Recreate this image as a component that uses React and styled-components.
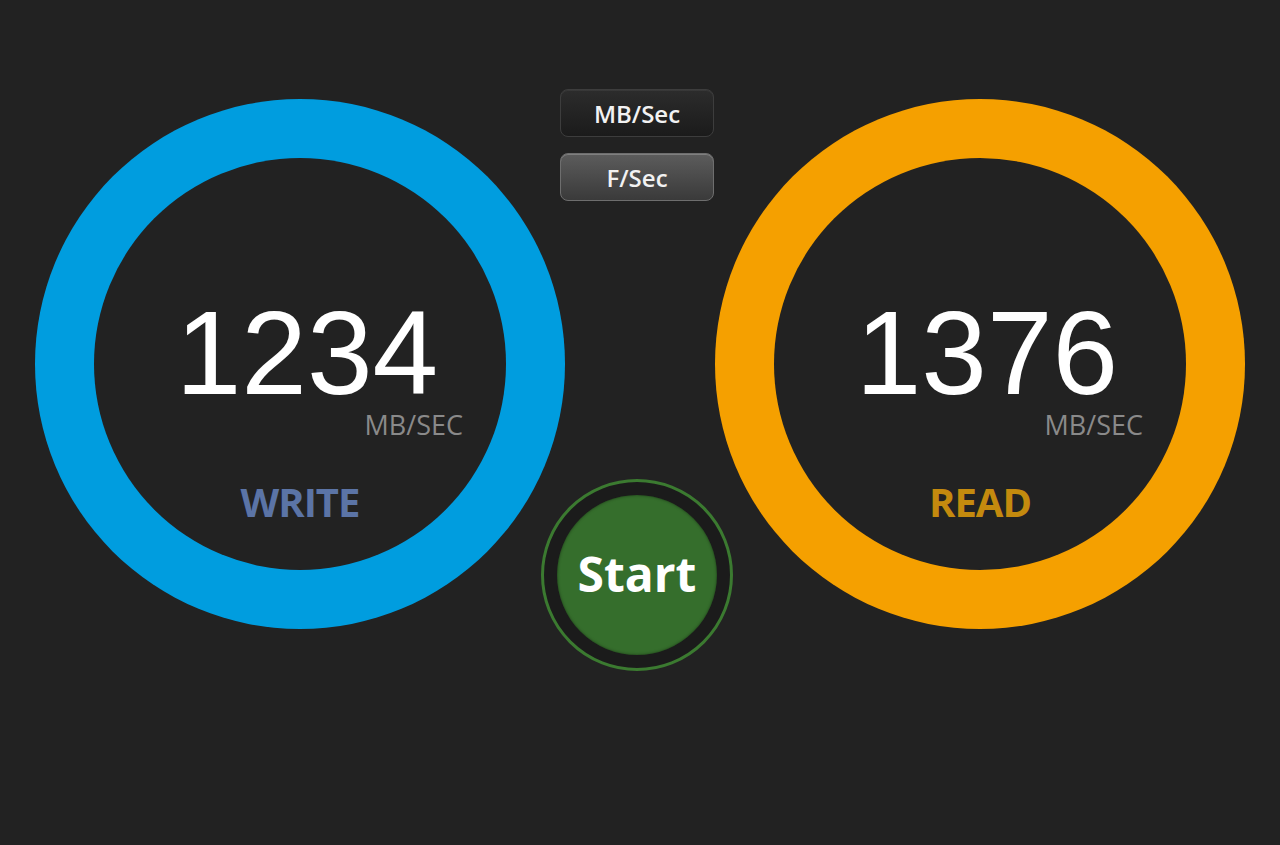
import React from "react";
import styled, { createGlobalStyle } from "styled-components";

const GlobalStyle = createGlobalStyle`
  html, body {
    margin: 0;
    padding: 0;
    background: #222222;
  }
  body {
    font-family: "Liberation Sans", Arial, sans-serif;
  }
`;

const Page = styled.div`
  display: flex;
  align-items: flex-start;
  height: 845px;
  padding-left: 35px;
  background: #222222;
  overflow: hidden;
  box-sizing: border-box;
`;

const Gauge = styled.div`
  width: 530px;
  height: 530px;
  margin-top: 99px;
  margin-left: ${(p) => p.$offset || 0}px;
  padding: 59px;
  box-sizing: border-box;
  border-radius: 50%;
  background: ${(p) => p.$ring};
  flex-shrink: 0;
`;

const Disc = styled.div`
  width: 100%;
  height: 100%;
  border-radius: 50%;
  background: #222222;
  display: flex;
  flex-direction: column;
  align-items: center;
  padding-top: 148px;
  box-sizing: border-box;
`;

const Value = styled.div`
  margin-left: 14px;
  font-family: "Liberation Sans", Arial, sans-serif;
  font-size: 118px;
  line-height: 0.8;
  color: #ffffff;
`;

const Unit = styled.div`
  align-self: flex-end;
  margin-top: 11px;
  padding-right: 43px;
  font-family: "Open Sans", "Liberation Sans", sans-serif;
  font-size: 27px;
  line-height: 1;
  color: #8a8a8a;
`;

const Label = styled.div`
  margin-top: 44px;
  font-family: "Open Sans", "Liberation Sans", sans-serif;
  font-weight: 700;
  font-size: 40px;
  letter-spacing: -1px;
  line-height: 1;
  color: ${(p) => p.$color};
`;

const Middle = styled.div`
  width: 144px;
  flex-shrink: 0;
  padding-top: 89px;
  display: flex;
  flex-direction: column;
  align-items: center;
`;

const UnitButton = styled.button`
  width: 154px;
  height: 48px;
  flex-shrink: 0;
  margin-bottom: 16px;
  border-radius: 8px;
  border: 1px solid ${(p) => (p.$active ? "#6e6e6e" : "#3d3d3d")};
  background: ${(p) =>
    p.$active
      ? "linear-gradient(#5c5c5c, #3a3a3a)"
      : "linear-gradient(#2c2c2c, #1b1b1b)"};
  box-shadow: inset 0 1px 0
    ${(p) => (p.$active ? "rgba(255,255,255,0.22)" : "rgba(255,255,255,0.06)")};
  color: #f2f2f2;
  font-family: "Open Sans", "Liberation Sans", sans-serif;
  font-weight: 600;
  font-size: 24px;
  padding: 0;
  cursor: pointer;
`;

const StartRing = styled.div`
  margin-top: 262px;
  width: 192px;
  height: 192px;
  flex-shrink: 0;
  box-sizing: border-box;
  border-radius: 50%;
  border: 3px solid #3b7a30;
  background: #1b1b1b;
  display: flex;
  align-items: center;
  justify-content: center;
`;

const StartButton = styled.button`
  width: 160px;
  height: 160px;
  border-radius: 50%;
  border: none;
  background: #356e2c;
  box-shadow: inset 0 0 3px rgba(0, 0, 0, 0.5);
  color: #ffffff;
  font-family: "Open Sans", "Liberation Sans", sans-serif;
  font-weight: 700;
  font-size: 48px;
  padding: 0 0 4px;
  cursor: pointer;
`;

function Meter({ ring, value, label, labelColor, offset }) {
  return (
    <Gauge $ring={ring} $offset={offset}>
      <Disc>
        <Value>{value}</Value>
        <Unit>MB/SEC</Unit>
        <Label $color={labelColor}>{label}</Label>
      </Disc>
    </Gauge>
  );
}

export default function App() {
  return (
    <>
      <GlobalStyle />
      <Page>
        <Meter ring="#009ddf" value="1234" label="WRITE" labelColor="#5b74a6" />
        <Middle>
          <UnitButton>MB/Sec</UnitButton>
          <UnitButton $active>F/Sec</UnitButton>
          <StartRing>
            <StartButton>Start</StartButton>
          </StartRing>
        </Middle>
        <Meter
          ring="#f5a000"
          value="1376"
          label="READ"
          labelColor="#c48a0e"
          offset={6}
        />
      </Page>
    </>
  );
}
